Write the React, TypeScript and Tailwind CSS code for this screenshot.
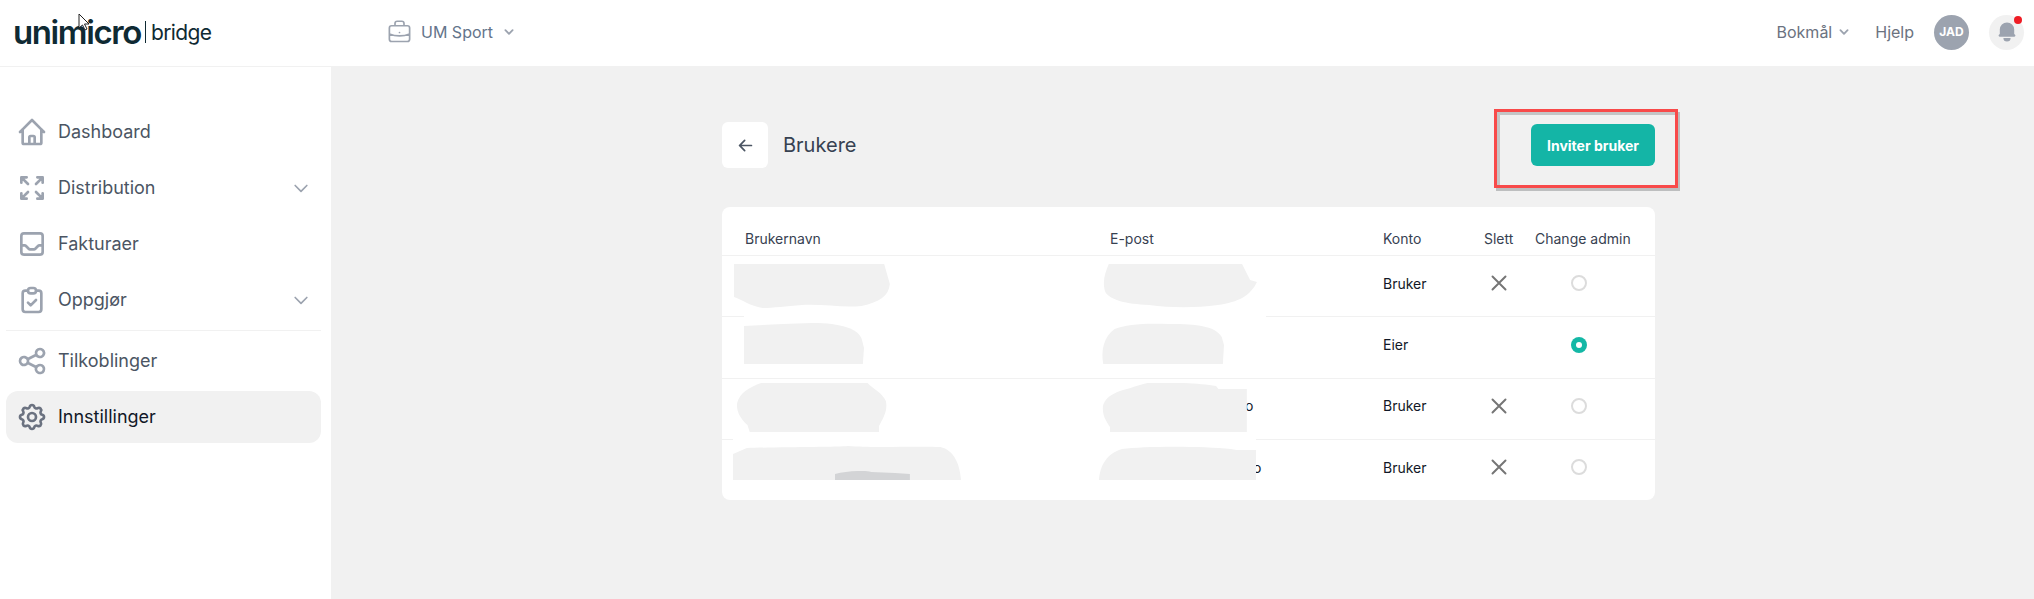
import { HiOutlineHome, HiOutlineArrowsExpand, HiOutlineInbox, HiOutlineClipboardCheck, HiOutlineShare, HiOutlineCog, HiOutlineBriefcase, HiOutlineChevronDown, HiChevronDown, HiBell, HiArrowLeft, HiOutlineX } from "react-icons/hi";

const NavItem = ({ icon, label, chevron, active }: { icon: React.ReactNode; label: string; chevron?: boolean; active?: boolean }) => (
    <div className={`flex h-[52px] items-center gap-[10px] rounded-xl pl-[10px] pr-[10px] ${active ? "bg-[#f1f1f1] text-[#111827]" : "text-[#4b5563]"}`}>
        <span className={active ? "text-[#6b7280]" : "text-[#9ca3af]"}>{icon}</span>
        <span className="flex-1 font-['Inter'] text-[18px] leading-6">{label}</span>
        {chevron && <HiOutlineChevronDown className="text-[#9ca3af]" size={20} />}
    </div>
);

const Blob = ({ className, w, vw, h, d, fill = "#f1f1f1" }: { className: string; w: number; vw: number; h: number; d: string; fill?: string }) => (
    <svg className={`absolute ${className}`} width={w} height={h} viewBox={`0 0 ${vw} ${h}`} preserveAspectRatio="none">
        <path d={d} fill={fill} />
    </svg>
);

const Row = ({ konto, slett, admin, tail, children }: { konto: string; slett?: boolean; admin?: boolean; tail?: string; children?: React.ReactNode }) => (
    <div className="relative grid h-[61.4px] grid-cols-[365px_273px_101px_51px_1fr] items-center border-t border-[#f1f1f1] pb-[6px] pl-[23px] font-['Inter'] text-[14px] text-[#111827]">
        <span />
        <span>{tail ? <span className={tail}>o</span> : null}</span>
        <span>{konto}</span>
        <span className="pl-[2px] text-[#757575]">{slett && <HiOutlineX size={26} strokeWidth={1.8} />}</span>
        <span>
            {admin ? (
                <span className="ml-[36px] flex size-4 items-center justify-center rounded-full bg-[#14b8a6]">
                    <span className="size-1.5 rounded-full bg-white" />
                </span>
            ) : (
                <span className="ml-[36px] block size-4 rounded-full border-2 border-[#dcdcdc]" />
            )}
        </span>
        {children}
    </div>
);

const App = () => {
    return (
        <div className="flex h-screen flex-col overflow-hidden bg-[#f1f1f1] font-['Inter']">
            <header className="relative flex h-[67px] shrink-0 items-center border-b border-[#f1f1f1] bg-white pb-[2px] pl-[13px] pr-[10px]">
                <div className="flex w-[373px] items-center">
                    <span className="font-['Inter'] text-[33px] font-semibold leading-none tracking-[-1.4px] text-[#0f2a33]">unimicro</span>
                    <span className="ml-[4px] h-[22px] w-px bg-[#0f2a33]" />
                    <span className="ml-[5px] font-['Inter'] text-[21px] leading-none tracking-[-0.6px] text-[#0f2a33]">bridge</span>
                </div>
                <div className="flex items-center text-[#64748b]">
                    <HiOutlineBriefcase size={27} className="text-[#9ca3af]" strokeWidth={1.5} />
                    <span className="ml-[8px] font-['Inter'] text-base">UM Sport</span>
                    <HiChevronDown size={18} className="ml-[7px] text-[#9ca3af]" />
                </div>
                <div className="ml-auto flex items-center">
                    <span className="font-['Inter'] text-base text-[#6b7280]">Bokmål</span>
                    <HiChevronDown size={18} className="ml-[3px] text-[#9ca3af]" />
                    <span className="ml-[22px] font-['Inter'] text-base text-[#6b7280]">Hjelp</span>
                    <span className="ml-[20px] flex size-[35px] items-center justify-center rounded-full bg-[#9ca3af] text-[12px] font-bold text-white">JAD</span>
                    <span className="relative ml-[20px] flex size-[35px] items-center justify-center rounded-full bg-[#f1f1f1] text-[#9ca3af]">
                        <HiBell size={24} />
                        <span className="absolute right-[2px] top-[1px] size-2 rounded-full bg-[#ef1c24]" />
                    </span>
                </div>
                <svg className="absolute left-[78px] top-[13px]" width="13" height="18" viewBox="0 0 13 18">
                    <path d="M1 1v14l3.5-3 2.5 5 2-1-2.5-5H11z" fill="#fff" stroke="#222" strokeWidth="1" />
                </svg>
            </header>

            <div className="flex flex-1">
                <aside className="flex w-[331px] flex-col gap-1 bg-white pl-[6px] pr-[10px] pt-[39px]">
                    <NavItem icon={<HiOutlineHome size={32} />} label="Dashboard" />
                    <NavItem icon={<HiOutlineArrowsExpand size={32} />} label="Distribution" chevron />
                    <NavItem icon={<HiOutlineInbox size={32} />} label="Fakturaer" />
                    <NavItem icon={<HiOutlineClipboardCheck size={32} />} label="Oppgjør" chevron />
                    <div className="h-px bg-[#f1f1f1]" />
                    <NavItem icon={<HiOutlineShare size={32} />} label="Tilkoblinger" />
                    <NavItem icon={<HiOutlineCog size={32} />} label="Innstillinger" active />
                </aside>

                <main className="flex-1 pl-[391px] pt-[55px]">
                    <div className="w-[933px]">
                        <div className="relative flex h-[46px] items-center justify-between">
                            <div className="flex items-center">
                                <button className="flex h-[46px] w-[46px] items-center justify-center rounded-md bg-white text-[#4b5563]">
                                    <HiArrowLeft size={17} />
                                </button>
                                <h1 className="ml-[15px] font-['Inter'] text-[20px] font-normal text-[#374151]">Brukere</h1>
                            </div>
                            <button className="h-[42px] w-[124px] rounded-md bg-[#14b5a6] font-['Inter'] text-[14px] font-bold text-white">Inviter bruker</button>
                            <div className="absolute right-[-23px] top-[-13px] h-[79px] w-[184px] border-[3px] border-[#f84a4a] shadow-[2px_3px_0_#bdbebf,inset_3px_3px_0_#c4c5c6]" />
                        </div>

                        <div className="mt-[39px] h-[293px] overflow-hidden rounded-lg bg-white">
                            <div className="grid h-[48px] grid-cols-[365px_273px_101px_51px_1fr] items-end pb-[6px] pl-[23px] text-[14px] leading-5 text-[#374151]">
                                <span>Brukernavn</span>
                                <span>E-post</span>
                                <span>Konto</span>
                                <span>Slett</span>
                                <span className="whitespace-nowrap">Change admin</span>
                            </div>
                            <Row konto="Bruker" slett>
                                <Blob className="left-[12px] top-[8px]" w={157} vw={138} h={44} d="M0 0H132L137 20C136 32 128 38 112 42C95 44 80 40 60 41C45 42 35 44 25 44C14 42 8 36 0 33Z" />
                                <Blob className="left-[381px] top-[8px]" w={154} vw={134} h={44} d="M5 0H121L128 16L134 18C128 32 118 38 100 41C80 44 60 44 40 41C20 40 6 36 2 28C-1 18 2 8 5 0Z" />
                            </Row>
                            <Row konto="Eier" admin>
                                <Blob className="left-[22px] top-[-1px]" w={522} vw={522} h={3} d="M0 0H522V3H0Z" fill="#fff" />
                                <Blob className="left-[22px] top-[6px]" w={120} vw={105} h={41} d="M0 3C15 2 30 1 60 0C85 0 100 6 103 16L105 25L104 41H0Z" />
                                <Blob className="left-[379px] top-[6px]" w={123} vw={108} h={41} d="M2 41C0 28 2 14 12 6C22 1 40 0 60 1C85 1 100 3 106 14L108 22L107 41Z" />
                            </Row>
                            <Row konto="Bruker" slett tail="ml-[135px]">
                                <Blob className="left-[14px] top-[4px]" w={151} vw={132} h={49} d="M22 0H115C120 6 128 10 131 18C133 28 128 36 125 43V49H12L10 42C4 36 0 28 1 20C3 10 12 4 22 0Z" />
                                <Blob className="left-[380px] top-[4px]" w={146} vw={128} h={49} d="M40 0C60 -1 85 0 100 3L102 6H127V49H7V44C2 36 0 30 1 22C4 12 14 8 25 5C30 3 35 1 40 0Z" />
                            </Row>
                            <Row konto="Bruker" slett tail="ml-[143px]">
                                <Blob className="left-[11px] top-[-1px]" w={523} vw={523} h={3} d="M0 0H523V3H0Z" fill="#fff" />
                                <Blob className="left-[11px] top-[6px]" w={228} vw={198} h={34} d="M0 8L12 2C40 1 90 1 100 0C120 2 160 0 180 1C192 4 197 18 198 34H0Z" />
                                <Blob className="left-[113px] top-[31px]" w={76} vw={67} h={9} d="M0 3C10 0 25 -1 32 1L53 2L66 3V9H0Z" fill="#d3d4d6" />
                                <Blob className="left-[377px] top-[6px]" w={157} vw={137} h={34} d="M0 34C1 20 6 8 20 3C40 0 90 0 115 3L120 4H137V34Z" />
                            </Row>
                        </div>
                    </div>
                </main>
            </div>
        </div>
    );
};

export default App;
